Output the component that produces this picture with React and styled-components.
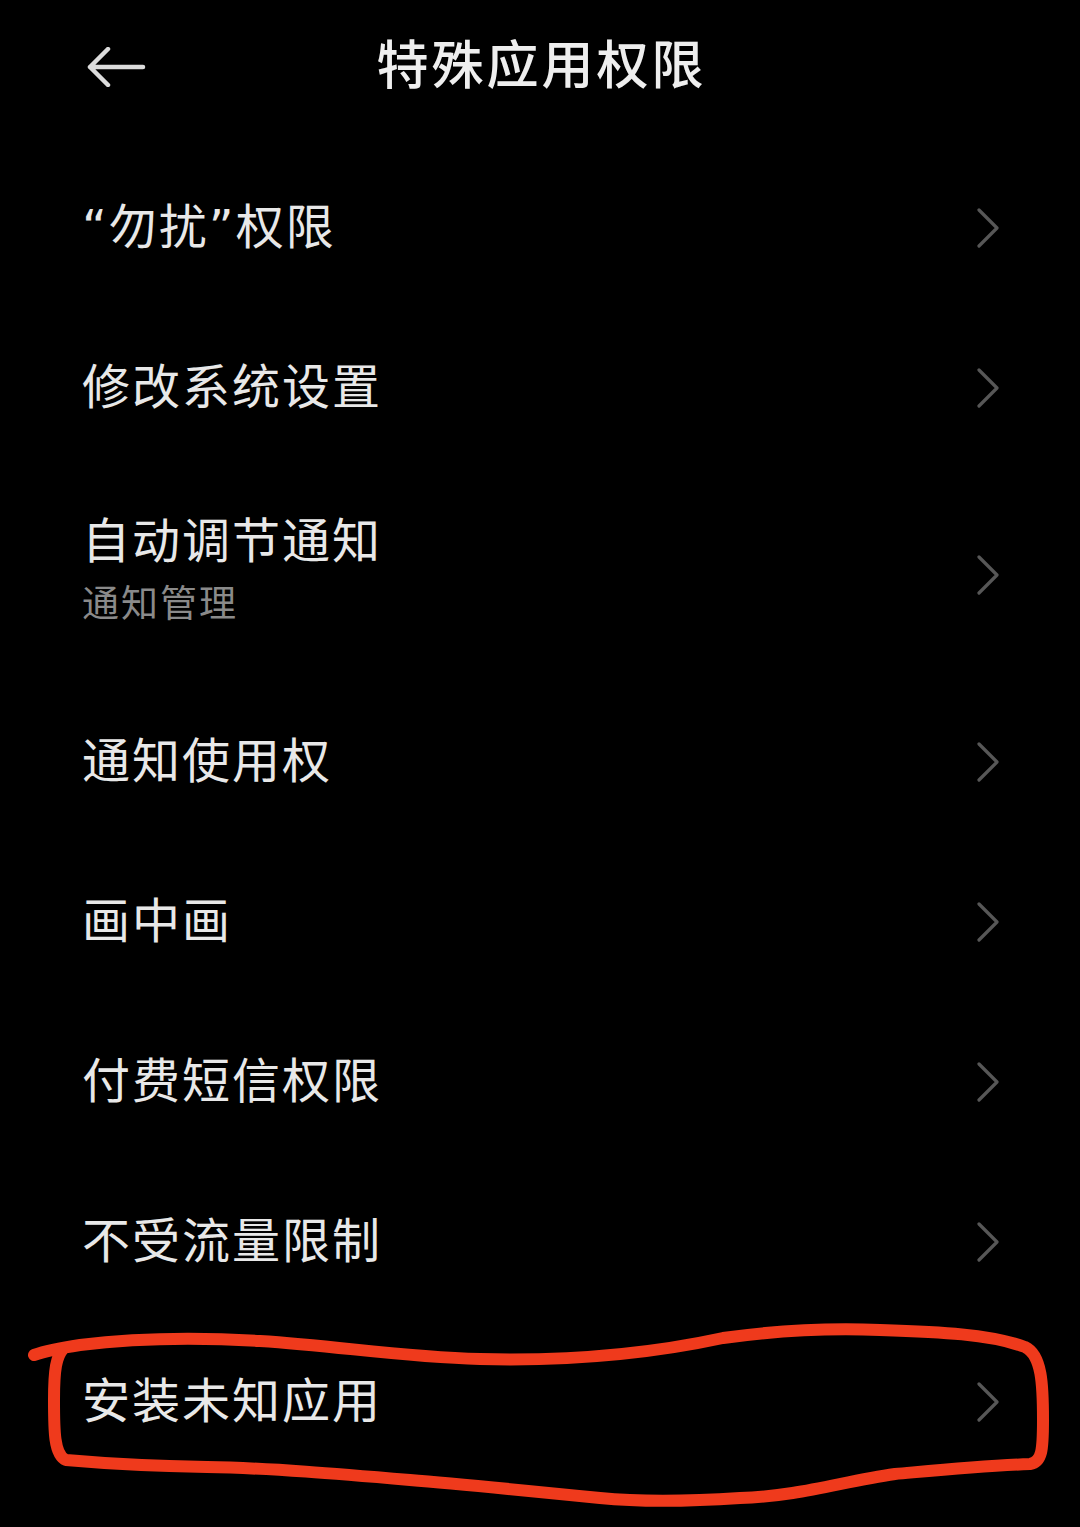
import styled, { createGlobalStyle } from 'styled-components'

const GlobalStyle = createGlobalStyle`
  html, body {
    margin: 0;
    padding: 0;
    background: #000;
  }
  body {
    font-family: "Noto Sans", "Noto Sans CJK SC", sans-serif;
  }
`

const items = [
  { title: '“勿扰”权限' },
  { title: '修改系统设置' },
  { title: '自动调节通知', sub: '通知管理' },
  { title: '通知使用权' },
  { title: '画中画' },
  { title: '付费短信权限' },
  { title: '不受流量限制' },
  { title: '安装未知应用' },
]

const App = () => {
  return (
    <Page>
      <GlobalStyle />
      <Header>
        <BackButton>
          <svg width="60" height="40" viewBox="0 0 60 40" fill="none">
            <path d="M4 20 H57 M22 2 L4 20 L22 38" stroke="#dcdcdc" strokeWidth="4.5" strokeLinecap="round" strokeLinejoin="round" />
          </svg>
        </BackButton>
        <Title>特殊应用权限</Title>
      </Header>
      <List>
        {items.map((item) => (
          <Row key={item.title} tall={!!item.sub}>
            <TextBlock>
              <ItemTitle>{item.title}</ItemTitle>
              {item.sub && <ItemSub>{item.sub}</ItemSub>}
            </TextBlock>
            <Chevron width="24" height="40" viewBox="0 0 24 40" fill="none">
              <path d="M3 2 L21 20 L3 38" stroke="#575757" strokeWidth="3.2" strokeLinecap="round" strokeLinejoin="round" />
            </Chevron>
          </Row>
        ))}
      </List>
      <Markup viewBox="0 0 1080 1527" fill="none">
        <path
          d="M34 1355 C 48 1350, 60 1348, 80 1345 C 120 1340, 180 1336, 260 1341 C 340 1346, 400 1357, 480 1359 C 560 1361, 640 1356, 723 1338 C 780 1330, 830 1328, 880 1330 C 940 1332, 990 1334, 1025 1347 C 1042 1355, 1043 1385, 1043 1420 C 1043 1450, 1042 1462, 1030 1464 C 980 1466, 940 1470, 895 1474 C 840 1482, 800 1496, 740 1498 C 680 1502, 640 1502, 600 1498 C 520 1490, 460 1484, 410 1480 C 340 1474, 270 1468, 207 1467 C 150 1466, 100 1463, 66 1460 C 54 1455, 54 1430, 54 1400 C 54 1370, 56 1356, 64 1348"
          stroke="#ef3a1c"
          strokeWidth="12"
          strokeLinecap="round"
          strokeLinejoin="round"
        />
      </Markup>
    </Page>
  )
}

const Page = styled.main`
  position: relative;
  width: 1080px;
  min-height: 1527px;
  background: #000;
  color: #e8e8e8;
  overflow: hidden;
`

const Header = styled.header`
  position: relative;
  height: 124px;
  display: flex;
  align-items: center;
  justify-content: center;
`

const BackButton = styled.div`
  position: absolute;
  left: 86px;
  top: 47px;
  display: flex;
`

const Title = styled.h1`
  margin: 0;
  font-family: "Noto Sans CJK SC", sans-serif;
  font-size: 52px;
  font-weight: 500;
  letter-spacing: 3px;
  color: #eeeeee;
  line-height: 1;
  padding-left: 3px;
`

const List = styled.ul`
  list-style: none;
  margin: 24px 0 0;
  padding: 0;
`

const Row = styled.li`
  height: ${(p) => (p.tall ? '214px' : '160px')};
  padding: 0 80px 0 82px;
  display: flex;
  align-items: center;
  justify-content: space-between;
`

const TextBlock = styled.div`
  display: flex;
  flex-direction: column;
  margin-top: -3px;
`

const ItemTitle = styled.span`
  font-family: "DejaVu Sans", "Noto Sans CJK SC", sans-serif;
  font-size: 48px;
  line-height: 58px;
  color: #e8e8e8;
  letter-spacing: 2px;
`

const ItemSub = styled.span`
  font-size: 37px;
  line-height: 66px;
  color: #8a8a8a;
  letter-spacing: 2px;
`

const Chevron = styled.svg`
  flex: none;
`

const Markup = styled.svg`
  position: absolute;
  left: 0;
  top: 0;
  width: 1080px;
  height: 1527px;
  pointer-events: none;
`

export default App
